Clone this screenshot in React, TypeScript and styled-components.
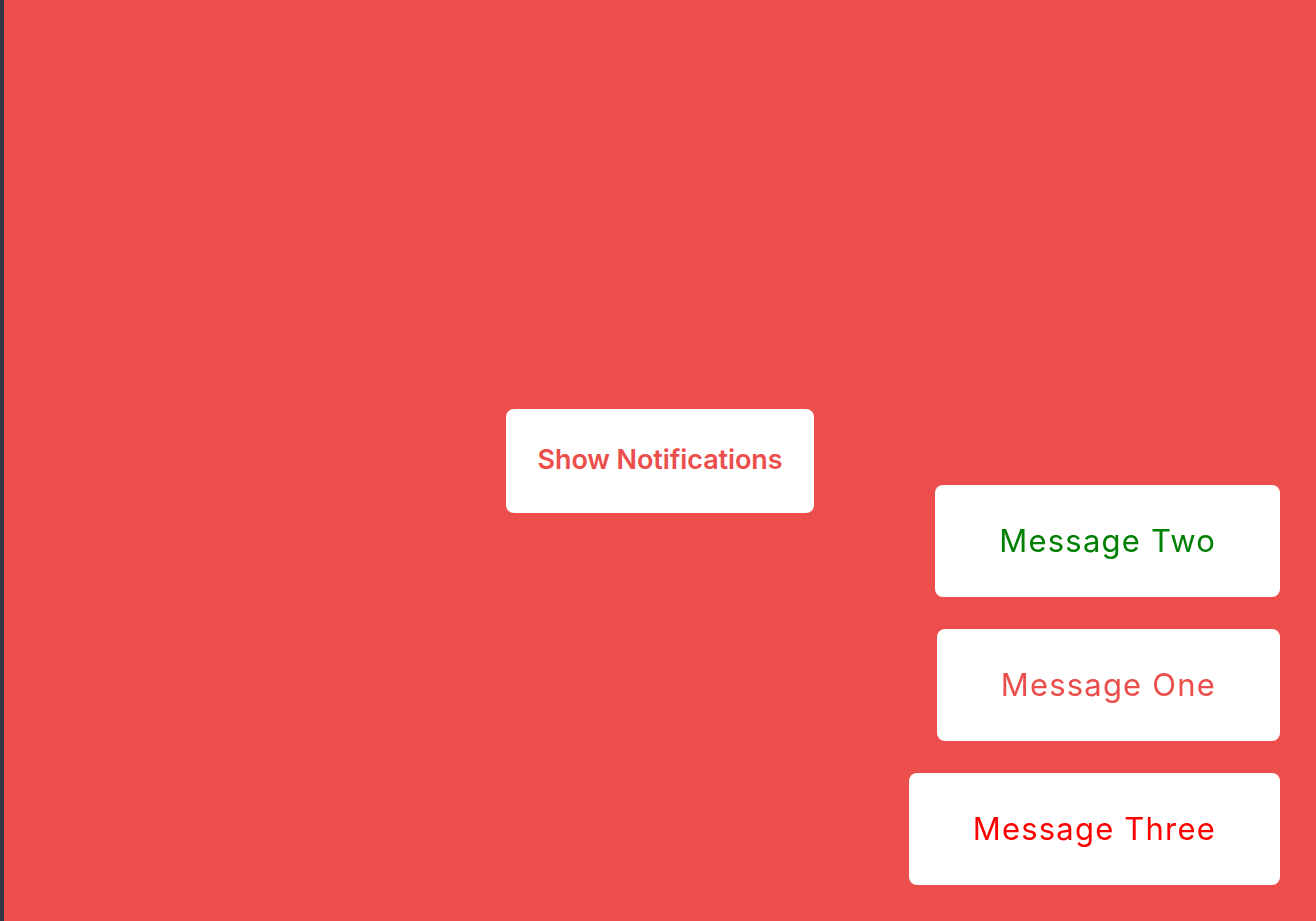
import React from "react";
import styled, { createGlobalStyle } from "styled-components";

const Global = createGlobalStyle`
  html, body {
    margin: 0;
    padding: 0;
    height: 100%;
  }
  body {
    background: #eb4e4b;
    font-family: "Inter", "Noto Sans", sans-serif;
  }
  #root {
    height: 100%;
  }
`;

const Page = styled.main`
  box-sizing: border-box;
  height: 100vh;
  border-left: 4px solid #323842;
  background: #eb4e4b;
  display: flex;
  align-items: center;
  justify-content: center;
`;

const ShowButton = styled.button`
  box-sizing: border-box;
  width: 308px;
  height: 104px;
  margin-top: 1px;
  padding: 0 0 3px;
  border: none;
  border-radius: 8px;
  background: #ffffff;
  color: #eb4e4b;
  font-family: "Inter", "Noto Sans", sans-serif;
  font-size: 27px;
  font-weight: 600;
  letter-spacing: -0.1px;
  cursor: pointer;
`;

const ToastStack = styled.div`
  position: fixed;
  right: 36px;
  bottom: 36px;
  display: flex;
  flex-direction: column;
  align-items: flex-end;
  gap: 32px;
`;

const Toast = styled.div<{ $color: string }>`
  box-sizing: border-box;
  height: 112px;
  padding: 0 64px 2px;
  border-radius: 8px;
  background: #ffffff;
  color: ${(p) => p.$color};
  font-size: 31px;
  font-weight: 400;
  letter-spacing: 1.2px;
  display: flex;
  align-items: center;
  justify-content: center;
  white-space: nowrap;
`;

const messages = [
  { text: "Message Two", color: "#008000" },
  { text: "Message One", color: "#eb4e4b" },
  { text: "Message Three", color: "#ff0000" },
];

export default function App() {
  return (
    <>
      <Global />
      <Page>
        <ShowButton>Show Notifications</ShowButton>
      </Page>
      <ToastStack>
        {messages.map((m) => (
          <Toast key={m.text} $color={m.color}>
            {m.text}
          </Toast>
        ))}
      </ToastStack>
    </>
  );
}
